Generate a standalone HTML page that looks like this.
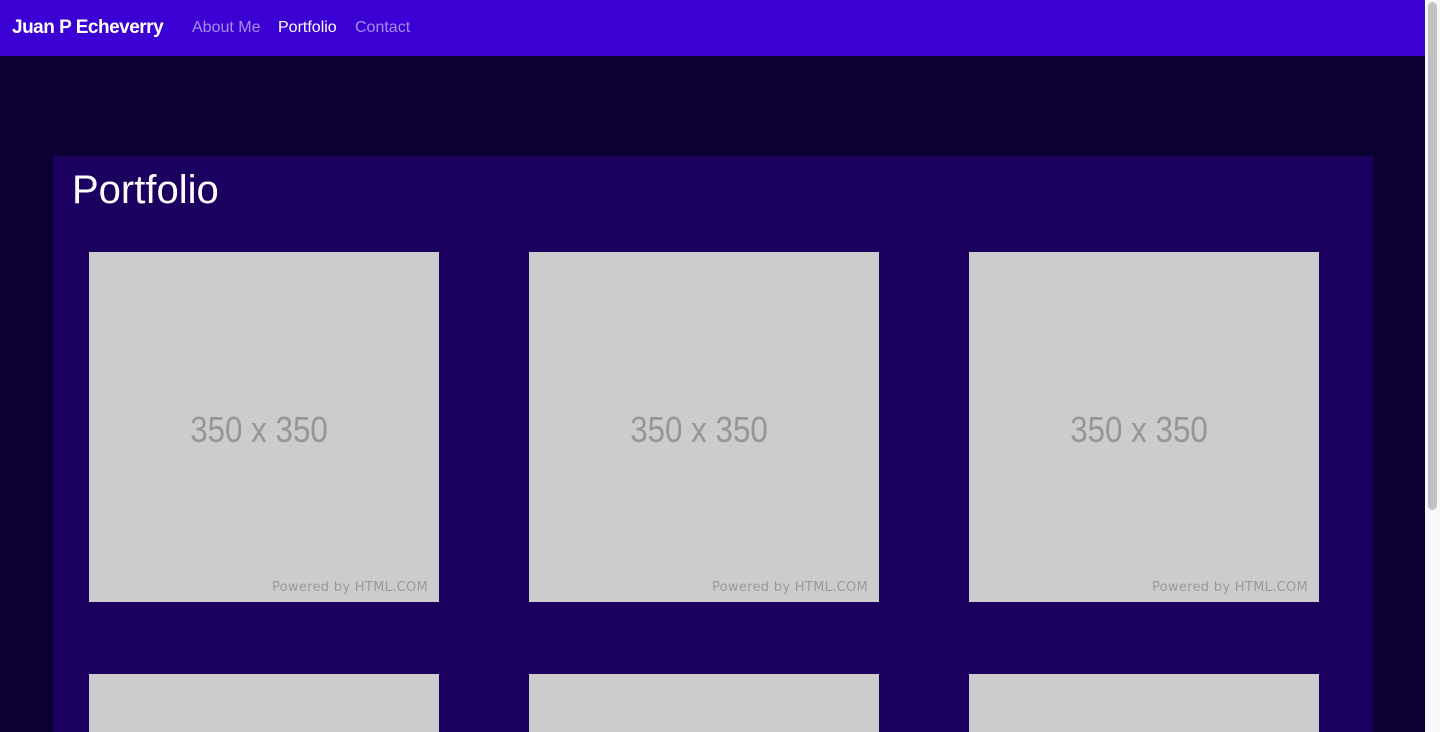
<!DOCTYPE html>
<html style="margin:0;width:1440px;height:732px;overflow:hidden"><head><style>
body{margin:0;width:1440px;height:732px;overflow:hidden;background:#0c0033;font-family:"Liberation Sans",sans-serif;position:relative}
nav{position:absolute;left:0;top:0;width:1425px;height:56px;background:#3a00d4}
nav span{position:absolute;top:19px;font-size:16px;color:rgba(255,255,255,.55)}
.sb{position:absolute;left:1425px;top:0;width:15px;height:732px;background:#f8f8f8}
.sb div{position:absolute;left:3px;top:2px;width:9px;height:508px;background:#c1c1c1;border-radius:5px}
.c{position:absolute;left:53px;top:156px;width:1320px;height:576px;background:#1c0060}
h1{position:absolute;left:72px;top:168px;margin:0;font-size:40px;font-weight:400;color:#fff}
.p{position:absolute;width:350px;height:350px;background:#cccccc;overflow:hidden}
.p b{position:absolute;left:0;right:10px;top:157px;text-align:center;font-weight:400;font-size:36px;color:#969696;transform:scaleX(.87)}
.p i{position:absolute;right:11px;bottom:7px;font-style:normal;font-size:13px;color:#9a9a9a;font-family:"DejaVu Sans",sans-serif;letter-spacing:.3px}
.s{height:58px}
</style></head><body>
<nav>
<span style="left:12px;top:17px;font-size:19px;color:#fff;font-weight:bold;letter-spacing:-.5px">Juan P Echeverry</span>
<span style="left:192px">About Me</span>
<span style="left:278px;color:#fff">Portfolio</span>
<span style="left:355px">Contact</span>
</nav>
<div class="sb"><div></div></div>
<div class="c"></div>
<h1>Portfolio</h1>
<div class="p" style="left:89px;top:252px"><b>350 x 350</b><i>Powered by HTML.COM</i></div>
<div class="p" style="left:529px;top:252px"><b>350 x 350</b><i>Powered by HTML.COM</i></div>
<div class="p" style="left:969px;top:252px"><b>350 x 350</b><i>Powered by HTML.COM</i></div>
<div class="p s" style="left:89px;top:674px"></div>
<div class="p s" style="left:529px;top:674px"></div>
<div class="p s" style="left:969px;top:674px"></div>
</body></html>
